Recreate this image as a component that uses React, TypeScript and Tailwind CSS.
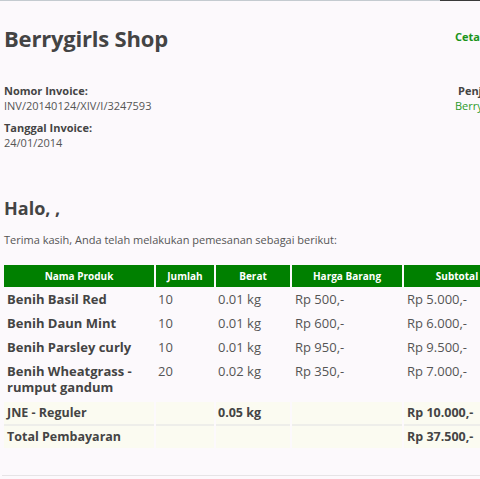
const rows = [
  { name: ["Benih Basil Red"], qty: "10", weight: "0.01 kg", price: "Rp 500,-", subtotal: "Rp 5.000,-" },
  { name: ["Benih Daun Mint"], qty: "10", weight: "0.01 kg", price: "Rp 600,-", subtotal: "Rp 6.000,-" },
  { name: ["Benih Parsley curly"], qty: "10", weight: "0.01 kg", price: "Rp 950,-", subtotal: "Rp 9.500,-" },
  { name: ["Benih Wheatgrass -", "rumput gandum"], qty: "20", weight: "0.02 kg", price: "Rp 350,-", subtotal: "Rp 7.000,-" },
];

export default function App() {
  return (
    <div
      className="w-[480px] h-[479px] overflow-hidden bg-[#fcf9fc] text-[#444]"
      style={{ fontFamily: '"Open Sans", "Noto Sans", sans-serif' }}
    >
      <div className="flex h-px">
        <div className="flex-1 bg-[#c4cbd0]" />
        <div className="w-[40px] bg-[#3a3a3a]" />
      </div>

      <div className="w-[520px] px-1">
        <div className="flex justify-between items-start pt-[22px]">
          <h1 className="text-[22px] font-bold leading-[30px] tracking-[-0.2px]">Berrygirls Shop</h1>
          <a className="mt-[6px] -mr-[13px] text-[11px] font-bold text-[#1a941a]">Cetak Invoice</a>
        </div>

        <div className="flex justify-between items-start mt-[30px]">
          <div className="text-[11px] leading-[15px]">
            <div className="font-bold">Nomor Invoice:</div>
            <div className="text-[#555]">INV/20140124/XIV/I/3247593</div>
            <div className="font-bold mt-[7px]">Tanggal Invoice:</div>
            <div className="text-[#555]">24/01/2014</div>
          </div>
          <div className="text-[11px] leading-[15px] -mr-[17px]">
            <div className="font-bold pl-[3px]">Penjual:</div>
            <div className="text-[#2a9a2a]">Berrygirls Shop</div>
          </div>
        </div>

        <h2 className="mt-[46px] text-[18px] font-bold leading-6">Halo, ,</h2>
        <p className="mt-[12px] text-[11px] leading-[15px] text-[#555]">
          Terima kasih, Anda telah melakukan pemesanan sebagai berikut:
        </p>

        <table className="mt-[18px] -ml-[2px] table-fixed border-separate border-spacing-x-[2px] border-spacing-y-0 text-[13px]">
          <thead>
            <tr className="bg-[#008000] text-white text-[10px] font-bold leading-[22px]">
              <th className="w-[150px] p-0 text-center">Nama Produk</th>
              <th className="w-[58px] p-0 text-center">Jumlah</th>
              <th className="w-[74px] p-0 text-center">Berat</th>
              <th className="w-[110px] p-0 text-center">Harga Barang</th>
              <th className="w-[106px] p-0 text-center">Subtotal</th>
            </tr>
          </thead>
          <tbody className="align-top leading-4">
            {rows.map((r, i) => {
              const pad = i === rows.length - 1 ? "pt-1 pb-[7px]" : "py-1";
              return (
                <tr key={i}>
                  <td className={`${pad} pl-[3px] font-bold text-[#444]`}>
                    {r.name.map((n) => (
                      <div key={n}>{n}</div>
                    ))}
                  </td>
                  <td className={`${pad} pl-[2px] text-[#555]`}>{r.qty}</td>
                  <td className={`${pad} pl-[2px] text-[#555]`}>{r.weight}</td>
                  <td className={`${pad} pl-[3px] text-[#555]`}>{r.price}</td>
                  <td className={`${pad} pl-[3px] text-[#555]`}>{r.subtotal}</td>
                </tr>
              );
            })}
          </tbody>
          <tfoot className="font-bold leading-4 text-[#444]">
            <tr className="bg-[#fbfbf1]">
              <td className="py-[3px] pl-[3px] text-[12.5px]">JNE - Reguler</td>
              <td />
              <td className="py-[3px] pl-[2px] text-[12.5px]">0.05 kg</td>
              <td />
              <td className="py-[3px] pl-[3px] text-[12.5px]">Rp 10.000,-</td>
            </tr>
            <tr className="bg-[#fbfbf1]">
              <td className="border-t-2 border-[#eeeeea] py-[3px] pl-[3px] text-[12.5px]">Total Pembayaran</td>
              <td className="border-t-2 border-[#eeeeea]" />
              <td className="border-t-2 border-[#eeeeea]" />
              <td className="border-t-2 border-[#eeeeea]" />
              <td className="border-t-2 border-[#eeeeea] py-[3px] pl-[3px] text-[12.5px]">Rp 37.500,-</td>
            </tr>
          </tfoot>
        </table>

        <div className="mt-[27px] -ml-[2px] border-t border-[#e6e4e6]" />
      </div>
    </div>
  );
}
